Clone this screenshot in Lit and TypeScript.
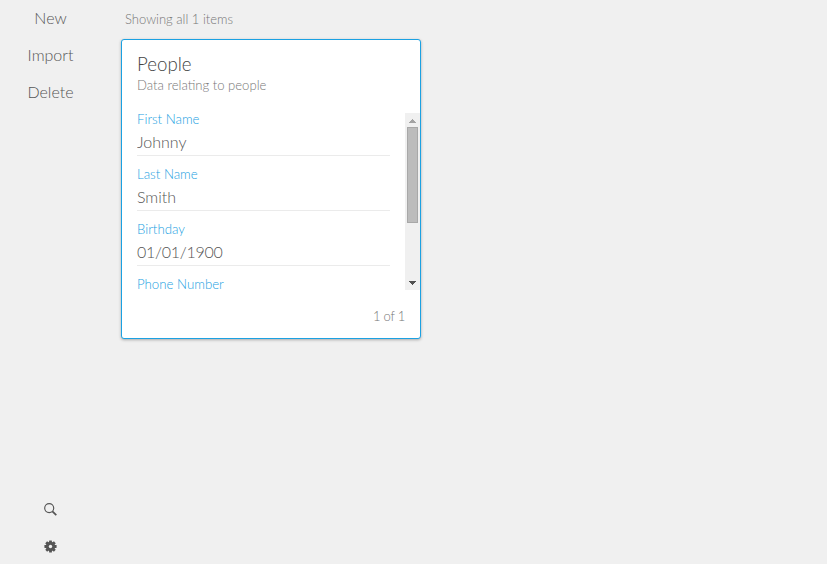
import { LitElement, html, css } from "lit";
import { customElement, state } from "lit/decorators.js";

interface Field {
  label: string;
  value: string;
}

@customElement("app-root")
export class AppRoot extends LitElement {
  static styles = css`
    :host {
      display: flex;
      height: 564px;
      overflow: hidden;
      background: #f0f0f0;
      font-family: Lato, "Liberation Sans", sans-serif;
      font-weight: 300;
      font-size: 16px;
      color: #555;
    }
    nav {
      width: 101px;
      display: flex;
      flex-direction: column;
      justify-content: space-between;
    }
    .item {
      height: 37px;
      box-sizing: border-box;
      padding-top: 1px;
      display: flex;
      align-items: center;
      justify-content: center;
    }
    .text {
      padding: 0 0 2px;
    }
    main {
      padding-left: 20px;
    }
    .status {
      height: 39px;
      box-sizing: border-box;
      padding-left: 4px;
      line-height: 39px;
      font-size: 13px;
      color: #777;
    }
    svg {
      display: block;
    }
  `;

  render() {
    return html`
      <nav>
        <div>
          <div class="item text">New</div>
          <div class="item text">Import</div>
          <div class="item text">Delete</div>
        </div>
        <div>
          <div class="item">
            <svg width="13" height="13" viewBox="0 0 13 13" fill="none" stroke="#555">
              <circle cx="5.2" cy="5.1" r="4.5" stroke-width="1.15" />
              <path d="M8.4 8.3 L12.3 12.1" stroke-width="1.7" />
            </svg>
          </div>
          <div class="item">
            <svg width="13" height="13" viewBox="-6.5 -6.5 13 13">
              <g fill="#555">
                <rect x="-1.4" y="-6.1" width="2.8" height="12.2" rx="0.4" />
                <rect x="-1.4" y="-6.1" width="2.8" height="12.2" rx="0.4" transform="rotate(45)" />
                <rect x="-1.4" y="-6.1" width="2.8" height="12.2" rx="0.4" transform="rotate(90)" />
                <rect x="-1.4" y="-6.1" width="2.8" height="12.2" rx="0.4" transform="rotate(135)" />
                <circle r="4.7" />
              </g>
              <circle r="1.7" fill="#f0f0f0" />
            </svg>
          </div>
        </div>
      </nav>
      <main>
        <div class="status">Showing all 1 items</div>
        <record-card></record-card>
      </main>
    `;
  }
}

@customElement("record-card")
export class RecordCard extends LitElement {
  static styles = css`
    :host {
      display: flex;
      flex-direction: column;
      box-sizing: border-box;
      width: 300px;
      height: 300px;
      border: 1px solid #1ba1e2;
      border-radius: 3px;
      background: #fff;
      box-shadow: 0 1px 3px rgba(0, 0, 0, 0.3);
    }
    header {
      height: 73px;
      box-sizing: border-box;
      padding: 12px 15px 0;
    }
    h1 {
      margin: 0;
      font-size: 18.7px;
      line-height: 24px;
      font-weight: 300;
      color: #444;
    }
    .subtitle {
      font-size: 13.1px;
      line-height: 18px;
      color: #777;
    }
    .body {
      display: flex;
      height: 177px;
      padding-left: 15px;
    }
    .fields {
      width: 253px;
      height: 181px;
      margin: -3px 15px 0 0;
      overflow: hidden;
    }
    .field {
      height: 55px;
    }
    .label {
      font-size: 13.25px;
      line-height: 19px;
      color: #1ba1e2;
    }
    .value {
      height: 26px;
      border-bottom: 1px solid #ebebeb;
      line-height: 26px;
      font-size: 16px;
      color: #555;
    }
    .numeric {
      letter-spacing: -0.25px;
    }
    .scroll {
      width: 15px;
      display: flex;
      flex-direction: column;
      align-items: center;
      background: #f0f0f0;
    }
    .arrow {
      height: 14px;
      width: 15px;
      display: block;
    }
    .track {
      flex: 1;
    }
    .thumb {
      width: 11px;
      height: 96px;
      box-sizing: border-box;
      border: 1px solid #a8a8a8;
      background: #bcbcbc;
    }
    footer {
      padding: 17px 15px 0;
      line-height: 18px;
      font-size: 13px;
      letter-spacing: -0.25px;
      text-align: right;
      color: #777;
    }
  `;

  @state() private fields: Field[] = [
    { label: "First Name", value: "Johnny" },
    { label: "Last Name", value: "Smith" },
    { label: "Birthday", value: "01/01/1900" },
    { label: "Phone Number", value: "" },
  ];

  render() {
    return html`
      <header>
        <h1>People</h1>
        <div class="subtitle">Data relating to people</div>
      </header>
      <div class="body">
        <div class="fields">
          ${this.fields.map(
            (f) => html`
              <div class="field">
                <div class="label">${f.label}</div>
                <div class="value ${/^\d/.test(f.value) ? "numeric" : ""}">${f.value}</div>
              </div>
            `
          )}
        </div>
        <div class="scroll">
          <svg class="arrow" viewBox="0 0 15 14" shape-rendering="crispEdges">
            <path d="M7 6h1v1h1v1h1v1h1v1H4V9h1V8h1V7h1z" fill="#a3a3a3" />
          </svg>
          <div class="track"><div class="thumb"></div></div>
          <svg class="arrow" viewBox="0 0 15 14" shape-rendering="crispEdges">
            <path d="M4 5h7v1h-1v1h-1v1h-1v1H7V8H6V7H5V6H4z" fill="#505050" />
          </svg>
        </div>
      </div>
      <footer>1 of 1</footer>
    `;
  }
}
